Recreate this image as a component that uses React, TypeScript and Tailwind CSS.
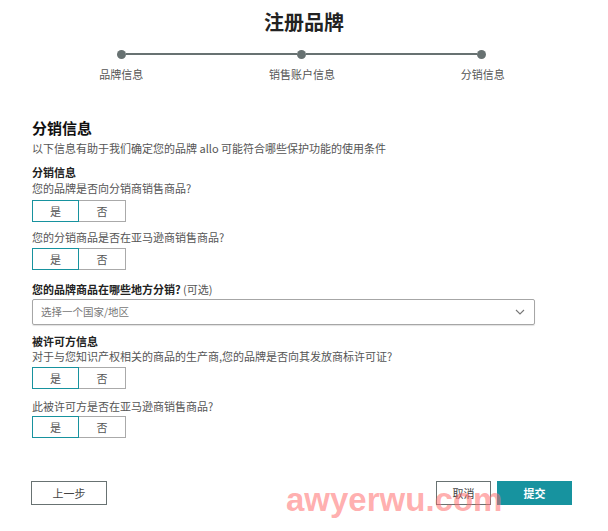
import React from "react";

const FONT = "font-['Noto_Sans_CJK_SC','Noto_Sans',sans-serif]";

const YesNo: React.FC<{ className?: string }> = ({ className = "" }) => (
  <div className={`flex h-[22px] ${className}`}>
    <button className="w-[47px] h-full border border-[#17929e] text-[11px] text-[#555] flex items-center justify-center">
      是
    </button>
    <button className="w-[47px] h-full border border-l-0 border-[#aaaaaa] text-[11px] text-[#555] flex items-center justify-center">
      否
    </button>
  </div>
);

const Dot = () => <span className="w-[9px] h-[9px] rounded-full bg-[#687272] shrink-0" />;

export default function App() {
  return (
    <div className={`relative w-[608px] h-[531px] bg-white overflow-hidden ${FONT}`}>
      {/* Title */}
      <h1 className="mt-[8px] text-center text-[20px] leading-[28px] font-bold text-[#222]">注册品牌</h1>

      {/* Stepper */}
      <div className="mt-[14px] ml-[117px] w-[369px] h-[8px] flex items-center">
        <Dot />
        <span className="flex-1 h-[2px] bg-[#687272]" />
        <Dot />
        <span className="flex-1 h-[2px] bg-[#687272]" />
        <Dot />
      </div>
      <div className="mt-[8px] ml-[31px] w-[542px] grid grid-cols-3 text-[11px] leading-[16px] text-[#555] text-center">
        <span>品牌信息</span>
        <span>销售账户信息</span>
        <span>分销信息</span>
      </div>

      {/* Form */}
      <div className="px-[32px] flex flex-col text-[#444]">
        <h2 className="mt-[36px] text-[15px] leading-[20px] font-bold text-[#111]">分销信息</h2>
        <p className="mt-[2px] text-[11px] leading-[16px] text-[#555]">
          以下信息有助于我们确定您的品牌 allo 可能符合哪些保护功能的使用条件
        </p>

        <h3 className="mt-[8px] text-[11px] leading-[16px] font-bold text-[#222]">分销信息</h3>
        <p className="text-[11px] leading-[16px] text-[#555]">您的品牌是否向分销商销售商品?</p>
        <YesNo className="mt-[4px]" />

        <p className="mt-[7px] text-[11px] leading-[16px] text-[#555]">您的分销商品是否在亚马逊商销售商品?</p>
        <YesNo className="mt-[3px]" />

        <p className="mt-[11px] text-[11px] leading-[16px] text-[#222]">
          <span className="font-bold">您的品牌商品在哪些地方分销?</span>
          <span className="text-[#555]"> (可选)</span>
        </p>
        <div className="mt-[2px] w-[503px] h-[26px] border border-[#a6a6a6] rounded-[2px] shadow-[0_1px_1px_rgba(0,0,0,0.12)] flex items-center justify-between pl-[8px] pr-[9px]">
          <span className="text-[10.5px] text-[#777]">选择一个国家/地区</span>
          <svg width="10" height="6" viewBox="0 0 10 6" fill="none">
            <path d="M1 1l4 4 4-4" stroke="#777" strokeWidth="1.1" />
          </svg>
        </div>

        <h3 className="mt-[8px] text-[11px] leading-[16px] font-bold text-[#222]">被许可方信息</h3>
        <p className="text-[11px] leading-[15px] text-[#555]">
          对于与您知识产权相关的商品的生产商,您的品牌是否向其发放商标许可证?
        </p>
        <YesNo className="mt-[3px]" />

        <p className="mt-[9px] text-[11px] leading-[16px] text-[#555]">此被许可方是否在亚马逊商销售商品?</p>
        <YesNo className="mt-[2px]" />
      </div>

      {/* Footer */}
      <div className="mt-[43px] pl-[31px] pr-[36px] flex justify-between">
        <button className="w-[76px] h-[24px] border-[1.5px] border-[#687272] text-[11px] text-[#444] flex items-center justify-center">
          上一步
        </button>
        <div className="flex gap-[6px]">
          <button className="w-[55px] h-[24px] border-[1.5px] border-[#687272] text-[11px] text-[#444] flex items-center justify-center">
            取消
          </button>
          <button className="w-[75px] h-[24px] bg-[#17939f] text-[11px] text-white font-bold flex items-center justify-center">
            提交
          </button>
        </div>
      </div>

      {/* Watermark */}
      <div className="absolute left-[286px] top-[480px] text-[33px] leading-[40px] font-bold text-[#ff6b6b]/55 font-['Liberation_Sans',sans-serif] pointer-events-none select-none">
        awyerwu.com
      </div>
    </div>
  );
}
